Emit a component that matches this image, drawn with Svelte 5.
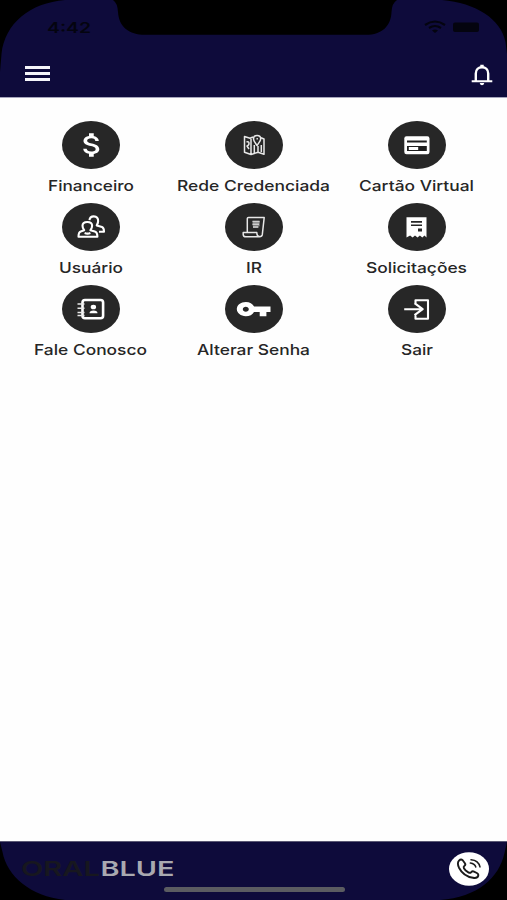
<script>
  // width is the drawn width of the label in px
  const items = [
    { icon: "money", label: "Financeiro", width: 86 },
    { icon: "map", label: "Rede Credenciada", width: 153 },
    { icon: "card", label: "Cartão Virtual", width: 115 },
    { icon: "users", label: "Usuário", width: 64 },
    { icon: "scroll", label: "IR", width: 16 },
    { icon: "receipt", label: "Solicitações", width: 101 },
    { icon: "contacts", label: "Fale Conosco", width: 113 },
    { icon: "key", label: "Alterar Senha", width: 113 },
    { icon: "exit", label: "Sair", width: 32 },
  ];
</script>

<div class="phone">
  <header>
    <div class="status">
      <svg class="time" width="46" height="20">
        <text x="0" y="13" textLength="44" lengthAdjust="spacingAndGlyphs">4:42</text>
      </svg>
      <svg class="signals" width="56" height="14" viewBox="0 0 56 14">
        <path d="M1 5q10-7 20 0M5 8q6-4 12 0" fill="none" stroke="#04040f" stroke-width="2.2" />
        <path d="M8 10.5q3-2 6 0L11 13z" fill="#04040f" />
        <rect x="29" y="2.5" width="26" height="9.5" rx="2" fill="#04040f" />
      </svg>
    </div>
    <div class="toolbar">
      <button class="menu" aria-label="Menu">
        <span></span>
        <span></span>
        <span></span>
      </button>
      <svg class="bell" width="22" height="22" viewBox="0 0 22 22">
        <path d="M4.8 17V9.5C4.8 5.7 7.5 3.2 11 3.2s6.2 2.5 6.2 6.3V17" fill="none" stroke="#fff" stroke-width="2.4" />
        <path d="M.7 16.2h20.6v2.1H.7zM9.3.7h3.4v3H9.3zM8.7 19h4.6q-.5 2.3-2.3 2.3t-2.3-2.3z" fill="#fff" />
      </svg>
    </div>
  </header>

  <main>
    {#each items as item}
      <div class="item">
        <svg class="icon" width="58" height="48" viewBox="0 0 58 48">
          <ellipse cx="29" cy="24" rx="29" ry="24" fill="#272727" />
          {#if item.icon === "money"}
            <path
              transform="translate(11.2 8.2) scale(1.58 1.31)"
              d="M11.8 10.9c-2.27-.59-3-1.2-3-2.15 0-1.09 1.01-1.85 2.7-1.85 1.78 0 2.44.85 2.5 2.1h2.21c-.07-1.72-1.12-3.3-3.21-3.81V3h-3v2.16c-1.94.42-3.5 1.68-3.5 3.61 0 2.31 1.91 3.46 4.7 4.13 2.5.6 3 1.48 3 2.41 0 .69-.49 1.79-2.7 1.79-2.06 0-2.87-.92-2.98-2.1h-2.2c.12 2.19 1.76 3.42 3.68 3.83V21h3v-2.15c1.95-.37 3.5-1.5 3.5-3.55 0-2.84-2.43-3.81-4.7-4.4z"
              fill="#fff"
            />
          {:else if item.icon === "map"}
            <g class="line thin">
              <path d="M28 16l-3 1.3-5.5-1.8v15.8l6.5 2.2 7-2.2 6 2V18l-3-1.3M26 18v15M33 25v6.5" />
              <path d="M32 24.5c-2-3-3.5-4.6-3.5-6.6 0-2.2 1.5-3.4 3.6-3.4s3.6 1.2 3.6 3.4c0 2-1.7 3.6-3.7 6.6z" />
              <path d="M31.5 17.8h1.4M21.5 21q2.5-1 2.5 1.3t-2 2.7l2 3M29.3 24v8M36.3 24v7" />
            </g>
          {:else if item.icon === "card"}
            <rect x="16.3" y="15.3" width="25.2" height="18" rx="2.2" fill="#fff" />
            <path d="M19 19.6h19.8v1.9H19zM19 25h19.8v5H19z" fill="#1f1f1f" />
            <path d="M20.8 26h9.4v3h-9.4z" fill="#fff" />
          {:else if item.icon === "users"}
            <g class="line">
              <path d="M27.5 17.2c.2-2.5 1.8-3.8 4.3-3.8 3 0 4.6 2 4.3 5-.1 2-.8 3-1.4 4l5.3 1.7c1.6.6 2 2.3 2 4.7h-5" />
              <path
                d="M22.2 27.2c-1.2-1.4-1.7-2.8-1.7-4.4 0-2.5 2-3.8 4.8-3.8s4.8 1.3 4.8 3.8c0 1.6-.5 3-1.7 4.4l4.4 1.2c2 .6 2.6 2.1 2.6 5.3H16.5c0-3.2.4-4.7 2.2-5.3z"
                fill="#272727"
              />
              <path d="M22.6 30q3 1.2 5.8 0" />
            </g>
          {:else if item.icon === "scroll"}
            <g class="line thin">
              <path d="M22.3 29V15.5q0-1 1.2-1h15.7l-1.9 17.2q-.3 2.1-2.8 2.1H21q-2.6 0-2.8-2.2v-2h13.6q.2 4 2.8 4" />
              <path d="M27.5 18.5h7M27.5 21.3h6.5M28 24h5.4" />
            </g>
            <path d="M27.7 18h7v5.3h-7z" fill="#bbb" fill-opacity=".6" />
          {:else if item.icon === "receipt"}
            <path d="M18.5 14.2h20v20.2l-2-1.8-2.2 1.8-2.4-1.8-2.4 1.8-2.5-1.8-2.4 1.8-2.5-1.8-3.6 1.8z" fill="#fff" />
            <path d="M23 18h11v1.7H23zM23 21.5h11v1.6H23zM30 25.5h4v3h-4z" fill="#272727" />
          {:else if item.icon === "contacts"}
            <rect x="20.5" y="15" width="20.6" height="18.3" rx="2.5" class="line heavy" />
            <path d="M15.5 19h7M15.5 23.2h7M15.5 27.4h7M15.5 30.5h7" class="line thin" />
            <ellipse cx="31.4" cy="22" rx="2.7" ry="2.3" fill="#fff" />
            <path d="M27.5 28.2q0-2.8 4-2.8t4 2.8z" fill="#fff" />
          {:else if item.icon === "key"}
            <path
              fill-rule="evenodd"
              d="M20.8 17c-5 0-9 3.1-9 7.1s4 7.1 9 7.1c3.7 0 6.8-1.7 8.2-4.3h5.7v4.3h6.7v-4.3h4.1v-5.3H29.1C27.7 18.8 24.6 17 20.8 17zm0 4.7c1.7 0 3 1.1 3 2.5s-1.3 2.5-3 2.5-3-1.1-3-2.5 1.3-2.5 3-2.5z"
              fill="#fff"
            />
          {:else}
            <path d="M16.2 24.2h17.3M26.5 18.2l8.2 6-8.2 6M27.5 18.5v-3.3H40v18.5H27.5V30.5" class="line" />
          {/if}
        </svg>
        <svg class="label" width={item.width} height="20">
          <text x="0" y="15" textLength={item.width} lengthAdjust="spacingAndGlyphs">{item.label}</text>
        </svg>
      </div>
    {/each}
  </main>

  <footer>
    <svg class="logo" width="156" height="28">
      <text class="dark" x="0" y="21" textLength="79" lengthAdjust="spacingAndGlyphs">ORAL</text>
      <text x="79.5" y="21" textLength="74" lengthAdjust="spacingAndGlyphs">BLUE</text>
    </svg>
    <svg class="call" width="40" height="34" viewBox="0 0 40 34">
      <ellipse cx="20" cy="17" rx="20" ry="16.7" fill="#fff" />
      <g fill="none" stroke="#1b1b1b" stroke-width="1.9" stroke-linejoin="round" stroke-linecap="round">
        <path
          d="M13.7 8.2c-1.3-1-2.5-.8-3.7.5-1.7 1.9-1.3 4.3 0 7 2.4 4.7 7.7 9 14 10.1 2.9.5 4.7-.3 5.2-1.9.4-1.3-.1-2.2-1.4-2.9l-2.8-1.4c-1.2-.6-2-.3-3 .7-.7.8-1.6.6-2.7 0-2-1.1-3.5-2.4-4.4-4.1-.6-1.1-.3-1.7.6-2.4 1-.8 1.2-1.5.4-2.6z"
        />
        <path d="M22 7.7q7.6.6 9 7.2M21.3 11q4.5.6 5.5 4" stroke-width="1.5" />
      </g>
    </svg>
    <div class="home"></div>
  </footer>

  <!-- device frame: rounded screen corners and the notch -->
  <svg class="frame" width="507" height="900" viewBox="0 0 507 900">
    <path d="M0 0H65C30 3 5 23 1.5 54L0 72z" />
    <path d="M507 0H442C476 3 501 19 505.5 42L507 54z" />
    <path d="M113 0Q117.5 3 118 12C119 27 129 34.8 145 34.8H366C382 34.8 391 26 391.5 12Q392 3 397 0z" />
    <path d="M0 842L2.5 852C7 876 30 896 65 900H0z" />
    <path d="M507 842L504.5 853C499 878 478 897 440 900H507z" />
  </svg>
</div>

<style>
  :global(body) {
    margin: 0;
    background: #fff;
  }
  .phone {
    position: relative;
    display: flex;
    flex-direction: column;
    width: 507px;
    height: 900px;
    overflow: hidden;
    background: #fefefe;
    font-family: Inter, "Liberation Sans", sans-serif;
  }
  header {
    box-sizing: border-box;
    height: 98px;
    background: #0e0b3b;
    border-bottom: 1px solid #a6a5bc;
  }
  svg {
    display: block;
    flex-shrink: 0;
    overflow: visible;
  }
  .status {
    display: flex;
    justify-content: space-between;
    align-items: flex-start;
    box-sizing: border-box;
    height: 50px;
    padding: 20px 27px 0 47px;
  }
  .time text {
    font-size: 15px;
    font-weight: 600;
    fill: #04040f;
  }
  .toolbar {
    display: flex;
    justify-content: space-between;
    align-items: center;
    height: 47px;
    padding: 0 14px 0 25px;
  }
  .menu {
    display: flex;
    flex-direction: column;
    gap: 3px;
    width: 25px;
    padding: 0;
    border: 0;
    background: none;
  }
  .menu span {
    height: 3px;
    background: #f5f5fa;
  }
  .bell {
    margin-top: 2px;
  }
  main {
    flex: 1;
    display: grid;
    grid-template-columns: repeat(3, 163px);
    grid-auto-rows: 82px;
    padding: 22.5px 9px 0;
  }
  .item {
    display: flex;
    flex-direction: column;
    align-items: center;
  }
  .icon .line {
    fill: none;
    stroke: #fff;
    stroke-width: 2.1;
    stroke-linejoin: round;
  }
  .icon .heavy {
    stroke-width: 2.6;
  }
  .icon .thin {
    stroke: #e8e8e8;
    stroke-width: 1.5;
  }
  .label {
    margin-top: 7px;
  }
  .label text {
    font-size: 14.5px;
    font-weight: 500;
    fill: #262626;
  }
  footer {
    position: relative;
    display: flex;
    justify-content: space-between;
    align-items: center;
    box-sizing: border-box;
    height: 59px;
    padding: 0 18px 5px 21px;
    background: #0e0b3b;
    border-top: 1px solid #5b5974;
  }
  .logo text {
    font-size: 20.5px;
    font-weight: 600;
    fill: #a9a9b0;
  }
  .logo .dark {
    fill: #17171f;
  }
  .home {
    position: absolute;
    left: 164px;
    bottom: 8.5px;
    width: 181px;
    height: 5px;
    border-radius: 3px;
    background: #5b5c61;
  }
  .frame {
    position: absolute;
    inset: 0;
    pointer-events: none;
  }
</style>
